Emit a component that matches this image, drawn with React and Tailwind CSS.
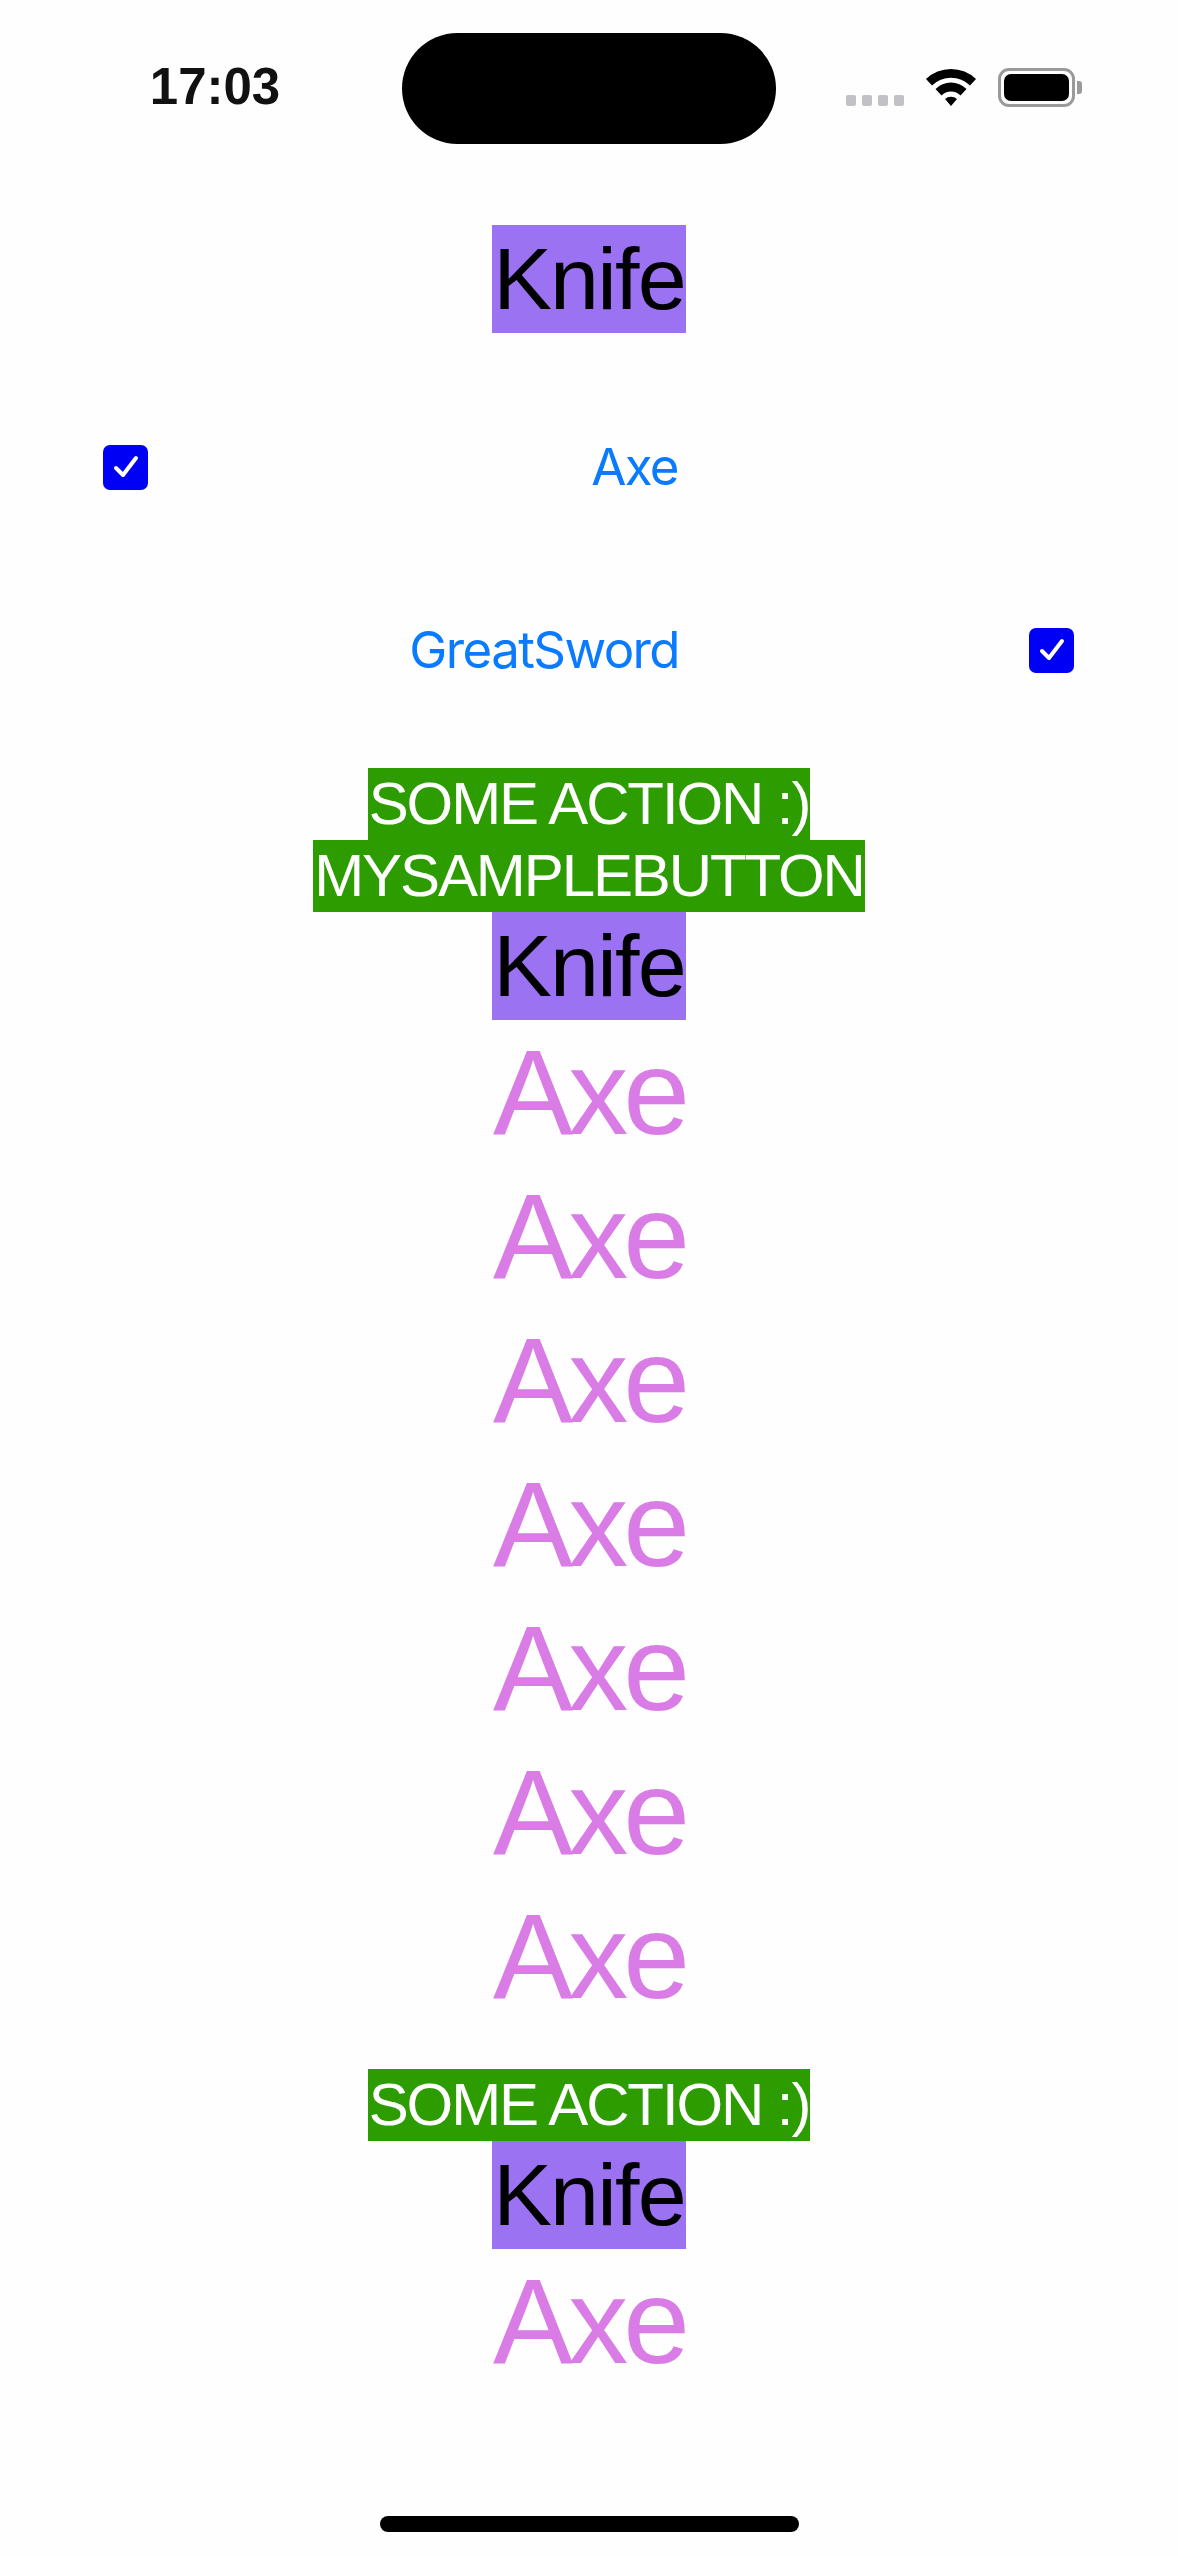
import React from "react";

const sans = { fontFamily: '"Liberation Sans", Arial, sans-serif' };
const sys = { fontFamily: 'Inter, "Liberation Sans", sans-serif' };

function CheckBox() {
  return (
    <div className="flex h-[45px] w-[45px] items-center justify-center rounded-[7px] bg-[#0000f5]">
      <svg width="30" height="28" viewBox="0 0 30 28" fill="none">
        <path d="M5 15 L12 22 L25 5" stroke="white" strokeWidth="4" strokeLinecap="round" strokeLinejoin="round" />
      </svg>
    </div>
  );
}

function StatusBar() {
  return (
    <div className="relative flex h-[180px] items-start">
      <div className="flex h-[172px] w-[402px] items-center justify-center pl-[28px]">
        <span className="mt-[2px] text-[51px] font-bold text-[#111]" style={sans}>17:03</span>
      </div>
      <div className="mt-[33px] h-[111px] w-[374px] rounded-full bg-black" />
      <div className="ml-[70px] mt-[68px] flex items-end">
        <div className="mb-[1px] flex gap-[6px]">
          <div className="h-[11px] w-[10px] rounded-[2px] bg-[#c2c2c6]" />
          <div className="h-[11px] w-[10px] rounded-[2px] bg-[#c2c2c6]" />
          <div className="h-[11px] w-[10px] rounded-[2px] bg-[#c2c2c6]" />
          <div className="h-[11px] w-[10px] rounded-[2px] bg-[#c2c2c6]" />
        </div>
        <svg className="ml-[20px]" width="54" height="39" viewBox="0 0 54 39">
          <path d="M2 11 A36 36 0 0 1 52 11 L46 17.5 A27 27 0 0 0 8 17.5 Z" fill="black" />
          <path d="M11.5 21 A22 22 0 0 1 42.5 21 L36.5 27.5 A13.5 13.5 0 0 0 17.5 27.5 Z" fill="black" />
          <path d="M21 31 A9 9 0 0 1 33 31 L27 38 Z" fill="black" />
        </svg>
        <div className="ml-[20px] flex items-center">
          <div className="flex h-[39px] w-[77px] items-center rounded-[11px] border-[3px] border-[#9a9a9a] p-[3px]">
            <div className="h-full w-full rounded-[7px] bg-black" />
          </div>
          <div className="ml-[2px] h-[13px] w-[5px] rounded-r-[3px] bg-[#9a9a9a]" />
        </div>
      </div>
    </div>
  );
}

function Knife() {
  return (
    <div className="flex justify-center">
      <div className="flex h-[108px] w-[194px] items-center justify-center bg-[#9b72f2]">
        <span className="text-[88px] leading-[108px] tracking-[-1.8px] text-black" style={sans}>Knife</span>
      </div>
    </div>
  );
}

function GreenButton({ children }) {
  return (
    <div className="flex justify-center">
      <div className="flex h-[72px] items-center justify-center bg-[#2d9c00] px-[1px]">
        <span className="text-[60px] leading-[72px] tracking-[-2.1px] text-white" style={sans}>{children}</span>
      </div>
    </div>
  );
}

function PinkAxe() {
  return (
    <div className="flex h-[144px] justify-center">
      <span className="text-[120px] leading-[144px] tracking-[-5px] text-[#d97ce6]" style={sans}>Axe</span>
    </div>
  );
}

export default function App() {
  const axes = [1, 2, 3, 4, 5, 6, 7];
  return (
    <div className="relative min-h-[2556px] w-[1178px] bg-[#fefefe]">
      <StatusBar />
      <div className="pt-[45px]">
        <Knife />

        <div className="mt-[104px] flex w-[678px] items-center justify-between pl-[103px]">
          <CheckBox />
          <span className="text-[51px] leading-[60px] tracking-[-1.6px] text-[#0a7aff]" style={sys}>Axe</span>
        </div>

        <div className="mt-[123px] flex w-[1074px] items-center">
          <div className="w-[679px] text-right">
            <span className="text-[51px] leading-[60px] tracking-[-1.6px] text-[#0a7aff]" style={sys}>GreatSword</span>
          </div>
          <div className="ml-auto">
            <CheckBox />
          </div>
        </div>

        <div className="mt-[88px]">
          <GreenButton>SOME ACTION :)</GreenButton>
          <GreenButton>MYSAMPLEBUTTON</GreenButton>
          <Knife />
          {axes.map((a) => (
            <PinkAxe key={a} />
          ))}
        </div>

        <div className="mt-[41px]">
          <GreenButton>SOME ACTION :)</GreenButton>
          <Knife />
          <PinkAxe />
        </div>
      </div>

      <div className="absolute bottom-[24px] left-[380px] h-[16px] w-[419px] rounded-full bg-black" />
    </div>
  );
}
